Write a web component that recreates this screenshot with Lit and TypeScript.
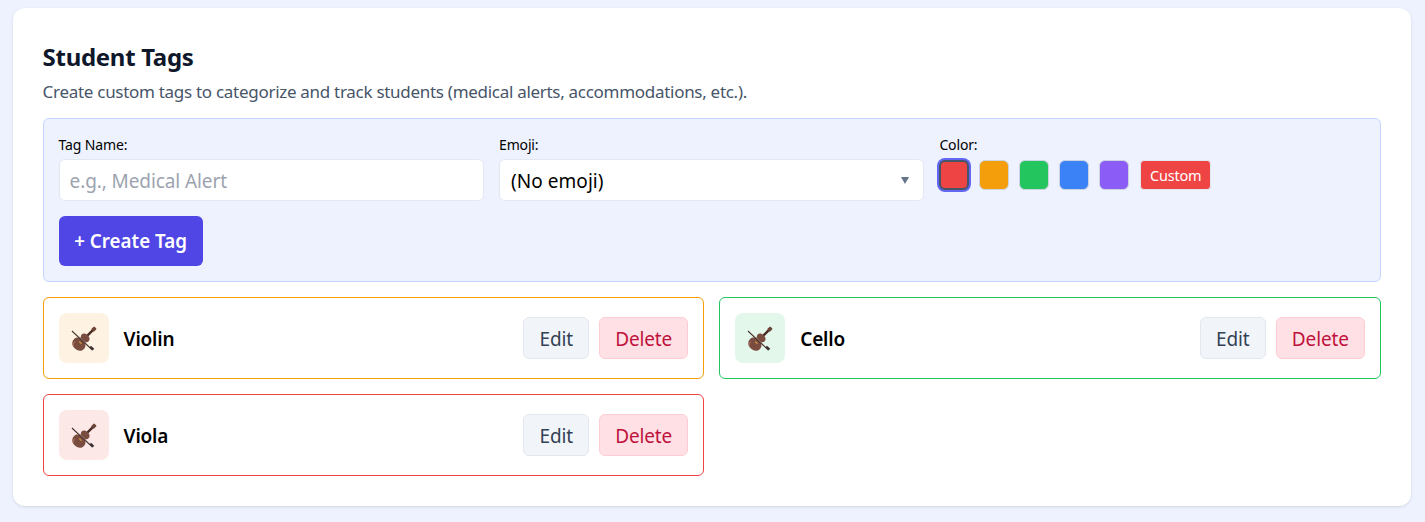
import { LitElement, html, css, svg } from "lit";
import { customElement, state } from "lit/decorators.js";

interface Tag {
  name: string;
  color: string;
  tint: string;
}

const violin = svg`
  <g transform="translate(7.5 19.5) rotate(45)">
    <rect x="-1.2" y="-21" width="2.4" height="11" fill="#4a2c24" />
    <rect x="-1.9" y="-24" width="3.8" height="4.4" rx="1" fill="#6b4436" />
    <path
      d="M0-13c3.4 0 5 1.6 4.8 3.8-.1 1.4-1.4 2-1.4 3s3.6 1.6 3.6 5.4c0 4.2-3.4 6.2-7 6.2s-7-2-7-6.2c0-3.8 3.6-4.4 3.6-5.4s-1.3-1.6-1.4-3c-.2-2.2 1.4-3.8 4.8-3.8z"
      fill="#7a4c40"
    />
    <path d="M-4.6 .5c-.3 2 .6 3.6 2.2 4.2" stroke="#a8705a" stroke-width="1" fill="none" />
    <rect x="-1.6" y="-3.4" width="3.2" height="1.5" fill="#c58a3c" />
  </g>
  <path d="M1 6 21.5 25" stroke="#3d2a26" stroke-width="1.2" />
  <path d="M1.4 5.6 19 22" stroke="#d9c3b4" stroke-width="0.5" />
  <rect x="18.6" y="22" width="4.4" height="2.4" transform="rotate(43 20.8 23.2)" fill="#3d3236" />
`;

@customElement("app-root")
export class AppRoot extends LitElement {
  @state() private tags: Tag[] = [
    { name: "Violin", color: "#f59e0b", tint: "#fef3e2" },
    { name: "Cello", color: "#22c55e", tint: "#e4f7eb" },
    { name: "Viola", color: "#ef4444", tint: "#fde8e8" },
  ];

  @state() private swatches = ["#ef4444", "#f59e0b", "#22c55e", "#3b82f6", "#8b5cf6"];

  static styles = css`
    :host {
      display: block;
      box-sizing: border-box;
      height: 522px;
      padding: 8px 14.2px 16px 12.6px;
      background: #eef2ff;
      font-family: "Noto Sans", "Open Sans", sans-serif;
      color: #000;
    }

    * {
      box-sizing: border-box;
    }

    .panel {
      background: #fff;
      border-radius: 12px;
      padding: 30px;
      height: 498px;
      box-shadow: 0 1px 3px rgba(15, 23, 42, 0.12);
    }

    h2 {
      margin: 0;
      font-size: 24px;
      line-height: 38px;
      font-weight: 700;
      color: #0f172a;
      letter-spacing: -0.3px;
    }

    .intro {
      margin: 0 0 12px;
      font-size: 17px;
      line-height: 24px;
      height: 30px;
      padding-top: 4px;
      color: #475569;
      letter-spacing: -0.29px;
    }

    .form {
      height: 164px;
      background: #eef2ff;
      border: 1px solid #c7d2fe;
      border-radius: 6px;
      padding: 15px;
    }

    .fields {
      display: grid;
      grid-template-columns: repeat(3, 1fr);
      gap: 15px;
    }

    label {
      display: block;
      font-size: 14px;
      line-height: 19px;
      height: 25px;
      padding-top: 1px;
      letter-spacing: -0.15px;
    }

    input,
    select {
      display: block;
      width: 100%;
      height: 42px;
      background: #fff;
      border: 1px solid #e2e8f0;
      border-radius: 6px;
      padding: 2px 10px 0;
      font: inherit;
      font-size: 19px;
      letter-spacing: -0.1px;
      color: #000;
      outline: none;
      appearance: none;
    }

    select {
      padding-left: 11px;
      letter-spacing: 0.05px;
    }

    input::placeholder {
      color: #9ca3af;
    }

    .select-wrap {
      position: relative;
    }

    .select-wrap::after {
      content: "";
      position: absolute;
      right: 15px;
      top: 18px;
      border-left: 4px solid transparent;
      border-right: 4px solid transparent;
      border-top: 7px solid #64748b;
    }

    .colors {
      display: flex;
      align-items: center;
      gap: 10px;
      height: 30px;
      margin-top: 1px;
    }

    .swatch {
      width: 30px;
      height: 30px;
      padding: 0;
      border: 1px solid #cbd5e1;
      border-radius: 6px;
    }

    .swatch.selected {
      border: 2px solid #475569;
      box-shadow: 0 0 0 2px #6366f1;
    }

    .custom {
      margin-left: 0.6px;
      width: 71.4px;
      height: 30px;
      padding: 0;
      border: 1px solid #e2e8f0;
      border-radius: 4px;
      background: #ef4444;
      color: #fff;
      font: inherit;
      font-size: 14.5px;
      letter-spacing: -0.2px;
    }

    .create {
      display: block;
      margin-top: 15px;
      width: 144px;
      height: 50px;
      padding: 0;
      border: none;
      border-radius: 6px;
      background: #4f46e5;
      color: #fff;
      font: inherit;
      font-size: 18.8px;
      font-weight: 600;
      letter-spacing: 0;
    }

    .tags {
      display: grid;
      grid-template-columns: repeat(2, 1fr);
      gap: 15px;
      margin-top: 15px;
    }

    .tag {
      display: flex;
      align-items: center;
      gap: 15px;
      height: 82px;
      padding: 15px;
      border: 1px solid;
      border-radius: 6px;
      background: #fff;
    }

    .icon {
      flex: none;
      display: flex;
      align-items: center;
      justify-content: center;
      width: 50px;
      height: 50px;
      border-radius: 8px;
    }

    .icon svg {
      width: 26px;
      height: 26px;
    }

    .name {
      flex: 1;
      padding-top: 2px;
      font-size: 19px;
      font-weight: 600;
      letter-spacing: -0.2px;
    }

    .actions {
      display: flex;
      gap: 10px;
    }

    .btn {
      height: 42px;
      padding: 2px 0 0;
      border: 1px solid;
      border-radius: 6px;
      font: inherit;
      font-size: 19px;
      letter-spacing: -0.15px;
    }

    .edit {
      width: 66px;
      background: #f1f5f9;
      border-color: #e2e8f0;
      color: #334155;
    }

    .delete {
      width: 89px;
      background: #ffe1e5;
      border-color: #fecdd3;
      color: #be123c;
    }
  `;

  protected render() {
    return html`
      <div class="panel">
        <h2>Student Tags</h2>
        <p class="intro">Create custom tags to categorize and track students (medical alerts, accommodations, etc.).</p>
        <div class="form">
          <div class="fields">
            <div>
              <label>Tag Name:</label>
              <input type="text" placeholder="e.g., Medical Alert" />
            </div>
            <div>
              <label>Emoji:</label>
              <div class="select-wrap">
                <select><option>(No emoji)</option></select>
              </div>
            </div>
            <div>
              <label>Color:</label>
              <div class="colors">
                ${this.swatches.map(
                  (c, i) => html`<button class="swatch ${i === 0 ? "selected" : ""}" style="background: ${c}"></button>`
                )}
                <button class="custom">Custom</button>
              </div>
            </div>
          </div>
          <button class="create">+ Create Tag</button>
        </div>
        <div class="tags">
          ${this.tags.map(
            (t) => html`
              <div class="tag" style="border-color: ${t.color}">
                <div class="icon" style="background: ${t.tint}">
                  <svg viewBox="0 0 26 26">${violin}</svg>
                </div>
                <div class="name">${t.name}</div>
                <div class="actions">
                  <button class="btn edit">Edit</button>
                  <button class="btn delete">Delete</button>
                </div>
              </div>
            `
          )}
        </div>
      </div>
    `;
  }
}
